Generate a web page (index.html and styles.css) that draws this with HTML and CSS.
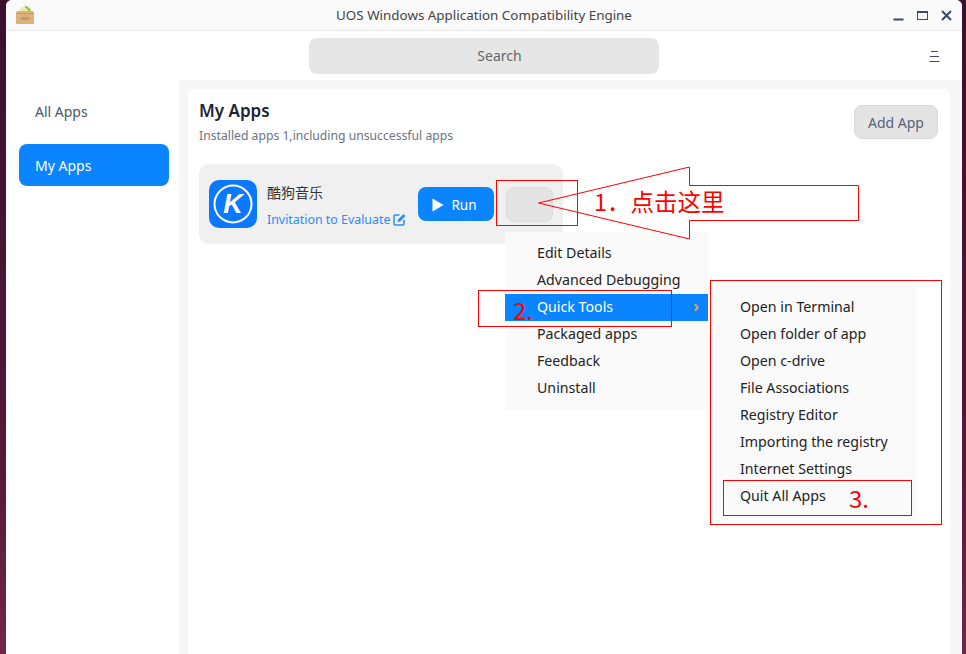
FILE: index.html
```html
<!DOCTYPE html>
<html lang="en">
<head>
<meta charset="utf-8">
<title>UOS Windows Application Compatibility Engine</title>
<link rel="stylesheet" href="styles.css">
</head>
<body>
<div class="window">
  <header class="titlebar">
    <svg class="app-logo" viewBox="0 0 20 20" width="20" height="20" aria-hidden="true">
      <path d="M4 6 C5 1 14 0 16 6 Z" fill="#f2e6b0"/>
      <path d="M10 1 C13 1 15 3 16 6 L13 6 C13 4 11.500 3 10 3 Z" fill="#8cc63f"/>
      <path d="M2 6 H18 L19 8 V18 Q19 19 18 19 H2 Q1 19 1 18 V8 Z" fill="#dcb27c"/>
      <rect x="1" y="8" width="18" height="1" fill="#c79a63"/>
      <rect x="6" y="12" width="8" height="3" fill="#c49a6c"/>
    </svg>
    <span class="title">UOS Windows Application Compatibility Engine</span>
    <div class="win-controls">
      <svg viewBox="0 0 11 11" width="11" height="11" aria-hidden="true"><rect x="0.500" y="8.500" width="10" height="2" fill="#3d4766"/></svg>
      <svg viewBox="0 0 11 11" width="11" height="11" aria-hidden="true"><rect x="0.500" y="1.500" width="10" height="8" fill="none" stroke="#3d4766"/><rect x="0.500" y="1" width="10" height="2" fill="#3d4766"/></svg>
      <svg viewBox="0 0 11 11" width="11" height="11" aria-hidden="true"><path d="M1 1 L10 10 M10 1 L1 10" stroke="#3d4766" stroke-width="2"/></svg>
    </div>
  </header>
  <div class="toolbar">
    <div class="search">Search</div>
    <svg class="hamburger" viewBox="0 0 11 11" width="11" height="11" aria-hidden="true"><path d="M2 0.500 H9 M1 5.500 H10 M0.500 10.500 H10.500" stroke="#3d4766" stroke-width="1"/></svg>
  </div>
  <div class="body-row">
    <nav class="sidebar">
      <a class="nav-item">All Apps</a>
      <a class="nav-item active">My Apps</a>
    </nav>
    <main class="content">
      <section class="panel">
        <div class="panel-head">
          <div>
            <h1>My Apps</h1>
            <p>Installed apps 1,including unsuccessful apps</p>
          </div>
          <button class="btn-add">Add App</button>
        </div>
        <article class="card">
          <svg class="kugou" viewBox="0 0 48 48" width="48" height="48" aria-hidden="true">
            <rect width="48" height="48" rx="10" fill="#0a78ff"/>
            <circle cx="24" cy="24" r="18.500" fill="none" stroke="#fff" stroke-width="2"/>
            <text x="24" y="33" text-anchor="middle" class="kugou-k">K</text>
          </svg>
          <div class="card-info">
            <div class="app-name">酷狗音乐</div>
            <a class="evaluate">Invitation to Evaluate
              <svg viewBox="0 0 13 13" width="13" height="13" aria-hidden="true"><path d="M6.500 2 H2 Q1 2 1 3 V11 Q1 12 2 12 H10 Q11 12 11 11 V7" fill="none" stroke="#2a8cff" stroke-width="1.500"/><path d="M5 6.500 L10.500 1 L12.500 3 L7 8.500 L4.500 9 Z" fill="#2a8cff"/></svg>
            </a>
          </div>
          <button class="btn-run">
            <svg viewBox="0 0 12 14" width="12" height="14" aria-hidden="true"><path d="M0.500 0.500 L11.500 7 L0.500 13.500 Z" fill="#fff"/></svg>
            Run
          </button>
          <button class="btn-more" aria-label="More"></button>
        </article>
      </section>
    </main>
  </div>
</div>

<ul class="menu menu-main">
  <li>Edit Details</li>
  <li>Advanced Debugging</li>
  <li class="selected">Quick Tools<span class="chev">›</span></li>
  <li>Packaged apps</li>
  <li>Feedback</li>
  <li>Uninstall</li>
</ul>
<ul class="menu menu-sub">
  <li>Open in Terminal</li>
  <li>Open folder of app</li>
  <li>Open c-drive</li>
  <li>File Associations</li>
  <li>Registry Editor</li>
  <li>Importing the registry</li>
  <li>Internet Settings</li>
  <li>Quit All Apps</li>
</ul>

<svg class="arrow" viewBox="0 0 966 654" width="966" height="654" aria-hidden="true">
  <path d="M538.500 203 L689.500 167 V185.500 H858.500 V220.500 H689.500 V239 Z" fill="none" stroke="#f00" stroke-width="1"/>
</svg>
<div class="mark mark-more"></div>
<div class="mark mark-quick"></div>
<div class="mark mark-sub"></div>
<div class="mark mark-quit"></div>
<span class="note note-1">1．点击这里</span>
<span class="note note-2">2.</span>
<span class="note note-3">3.</span>
</body>
</html>
```
FILE: styles.css
```css
* { box-sizing: border-box; }
html, body { margin: 0; height: 100%; }
body {
  position: relative;
  width: 966px;
  height: 654px;
  overflow: hidden;
  padding: 0 4px 0 6px;
  background: linear-gradient(180deg, #3c0f2c 0%, #55183a 70%, #72254a 100%);
  font-family: "Noto Sans", "Noto Sans CJK SC", sans-serif;
  color: #222;
}
.window {
  height: 654px;
  display: flex;
  flex-direction: column;
  background: #fff;
  border-radius: 6px 6px 0 0;
  overflow: hidden;
}
.titlebar {
  position: relative;
  flex: 0 0 31px;
  display: flex;
  align-items: center;
  justify-content: center;
  background: #fafafa;
  border-bottom: 1px solid #e8e8e8;
}
.app-logo { position: absolute; left: 9px; top: 5px; }
.title { font-size: 13.4px; color: #444; }
.win-controls {
  position: absolute;
  right: 10px;
  top: 10px;
  display: flex;
  gap: 13px;
}
.toolbar {
  position: relative;
  flex: 0 0 49px;
  display: flex;
  align-items: center;
  justify-content: center;
  background: #fff;
}
.search {
  width: 350px;
  height: 36px;
  margin-top: 1px;
  padding-left: 31px;
  border-radius: 8px;
  background: #e6e6e6;
  color: #666;
  font-size: 14px;
  line-height: 36px;
  text-align: center;
}
.hamburger { position: absolute; right: 22px; top: 20px; }
.body-row { flex: 1; display: flex; min-height: 0; }
.sidebar {
  flex: 0 0 173px;
  padding: 10px 10px 0 13px;
  display: flex;
  flex-direction: column;
  gap: 12px;
}
.nav-item {
  height: 42px;
  padding-left: 16px;
  border-radius: 8px;
  font-size: 14px;
  line-height: 44px;
  color: #4a5568;
}
.nav-item.active { background: #0a84ff; color: #fff; }
.content {
  flex: 1;
  padding: 9px 12px 0 9px;
  background: #f7f7f7;
}
.panel {
  height: 100%;
  padding: 10px 12px 0 11px;
  background: #fff;
  border-radius: 6px 6px 0 0;
}
.panel-head {
  display: flex;
  justify-content: space-between;
  align-items: flex-start;
}
h1 {
  margin: 0;
  font-size: 17px;
  line-height: 24px;
  font-weight: 600;
  color: #1d2433;
}
.panel-head p {
  margin: 4px 0 0;
  font-size: 12.2px;
  line-height: 18px;
  color: #6b7280;
}
.btn-add {
  width: 84px;
  height: 34px;
  margin-top: 6px;
  border: 1px solid #d8d8d8;
  border-radius: 8px;
  background: #e4e4e4;
  color: #55617a;
  font: 14px "Noto Sans", sans-serif;
}
.card {
  width: 364px;
  height: 80px;
  margin-top: 19px;
  padding: 0 10px;
  display: flex;
  align-items: center;
  background: #f0f0f0;
  border-radius: 10px;
}
.kugou { flex: none; }
.kugou-k { font: italic 700 27px "Liberation Sans", sans-serif; fill: #fff; }
.card-info { flex: 1; padding: 4px 0 0 10px; }
.app-name { font-size: 14px; line-height: 20px; color: #333; }
.evaluate {
  display: flex;
  align-items: center;
  gap: 3px;
  margin-top: 7px;
  font-size: 12.4px;
  line-height: 20px;
  color: #2a8cff;
  white-space: nowrap;
}
.btn-run {
  flex: none;
  width: 76px;
  height: 34px;
  display: flex;
  align-items: center;
  justify-content: center;
  gap: 7px;
  padding: 1px 3px 0 0;
  border: 0;
  border-radius: 8px;
  background: #0a84ff;
  color: #fff;
  font: 13.5px "Noto Sans", sans-serif;
}
.btn-more {
  flex: none;
  width: 47px;
  height: 35px;
  margin-left: 12px;
  border: 1px solid #dcdcdc;
  border-radius: 8px;
  background: #e4e4e4;
}
.menu {
  position: absolute;
  margin: 0;
  padding: 8px 0;
  list-style: none;
  background: #fafafa;
  font-size: 14.2px;
  color: #222;
}
.menu li {
  position: relative;
  height: 27px;
  line-height: 25px;
  white-space: nowrap;
}
.menu-main { left: 505px; top: 232px; width: 203px; height: 178px; }
.menu-main li { padding-left: 32px; }
.menu-main .selected { background: #0a84ff; color: #fff; }
.chev { position: absolute; right: 9px; top: 0; font-size: 16px; font-weight: 700; color: #e0a060; }
.menu-sub { left: 711px; top: 286px; width: 205px; height: 233px; }
.menu-sub li { padding-left: 29px; }
.arrow { position: absolute; left: 0; top: 0; pointer-events: none; }
.mark { position: absolute; border: 1px solid #f00; }
.mark-more { left: 496px; top: 180px; width: 82px; height: 46px; }
.mark-quick { left: 478px; top: 290px; width: 194px; height: 37px; }
.mark-sub { left: 710px; top: 280px; width: 232px; height: 245px; }
.mark-quit { left: 723px; top: 480px; width: 189px; height: 36px; }
.note {
  position: absolute;
  color: #f00;
  white-space: nowrap;
  font-family: "Noto Sans CJK SC", sans-serif;
  font-weight: 400;
}
.note-1 { left: 594px; top: 183px; font-size: 23.5px; line-height: 36px; }
.note-2 { left: 513px; top: 293px; font-size: 24px; line-height: 34px; }
.note-3 { left: 849px; top: 481px; font-size: 24px; line-height: 34px; }
```
